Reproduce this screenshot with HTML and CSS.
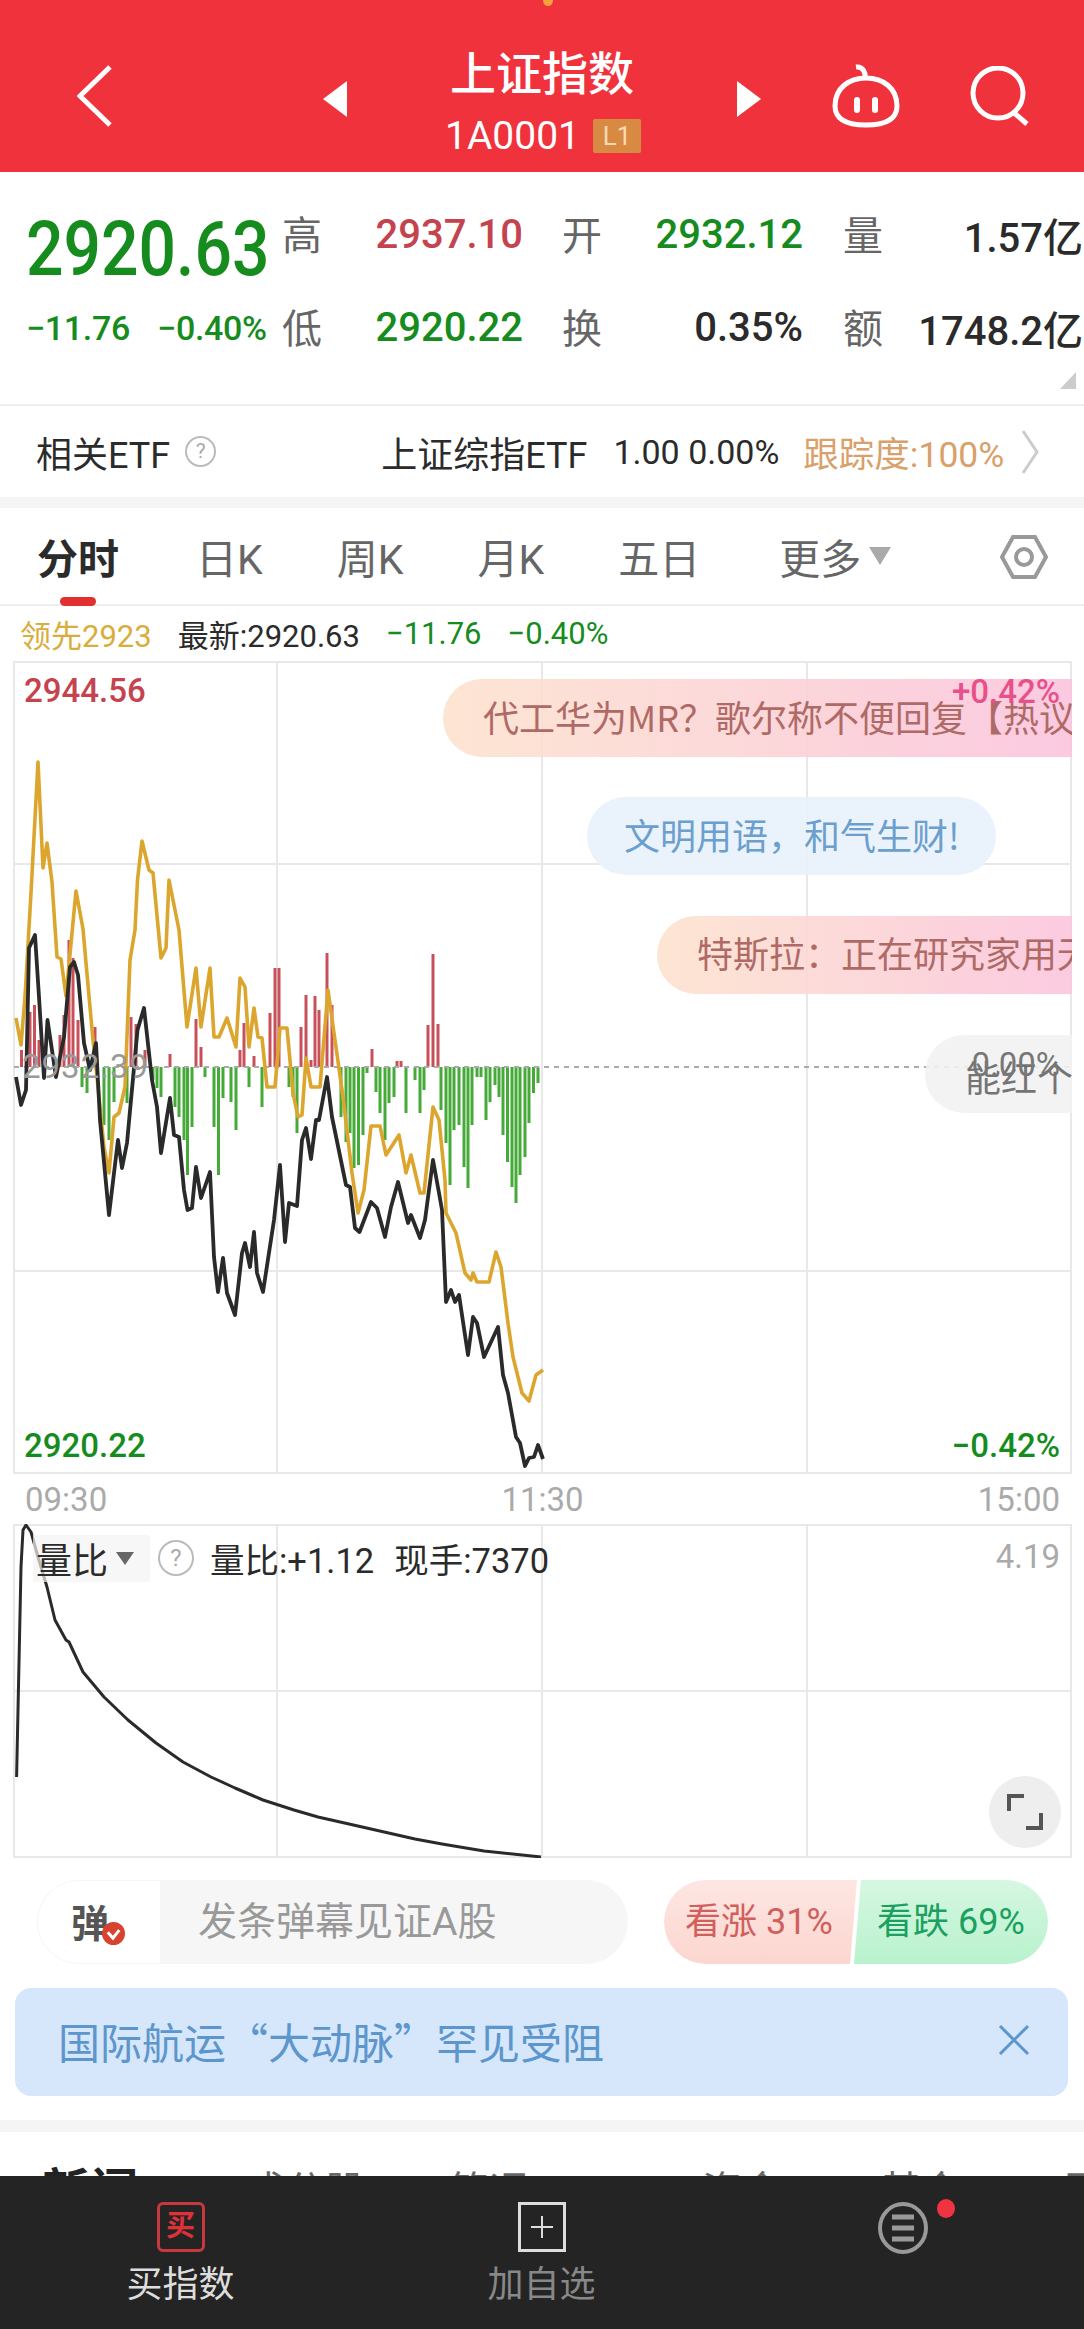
FILE: index.html
```html
<!DOCTYPE html>
<html lang="zh-CN">

<head>
    <title>上证指数</title>
    <meta name="viewport" content="width=device-width, initial-scale=1.0">
    <link rel="stylesheet" href="styles.css">
</head>

<body>
    <div id="header">
        <span class="status-dot"></span>
        <svg class="back" viewBox="0 0 35 62"><path d="M33 2 L3 31 L33 60" /></svg>
        <svg class="nav-arrow" viewBox="0 0 24 36"><path d="M24 0 V36 L0 18 Z" /></svg>
        <div class="title">
            <div class="title-name">上证指数</div>
            <div class="title-code">1A0001 <span class="badge">L1</span></div>
        </div>
        <svg class="nav-arrow" viewBox="0 0 24 36"><path d="M0 0 V36 L24 18 Z" /></svg>
        <svg class="pig" viewBox="0 0 70 64">
            <path d="M25 3 C32 2 35 9 34 15" />
            <path d="M4 42 C4 24 18 14 35 14 C52 14 66 24 66 42 C66 56 54 61 35 61 C16 61 4 56 4 42 Z" />
            <path class="eye" d="M26 36 V46 M44 36 V46" />
        </svg>
        <svg class="search" viewBox="0 0 60 60"><circle cx="29" cy="27" r="25" /><path d="M44 46 L58 58" /></svg>
    </div>

    <div id="quote">
        <div class="price">2920.63</div>
        <div class="label">高</div><div class="val red">2937.10</div>
        <div class="label right">开</div><div class="val green">2932.12</div>
        <div class="label right">量</div><div class="val">1.57亿</div>
        <div class="change"><span>−11.76</span><span>−0.40%</span></div>
        <div class="label">低</div><div class="val green">2920.22</div>
        <div class="label right">换</div><div class="val">0.35%</div>
        <div class="label right">额</div><div class="val">1748.2亿</div>
        <span class="corner"></span>
    </div>

    <div id="etf">
        <span>相关ETF</span>
        <span class="help">?</span>
        <span class="etf-name">上证综指ETF</span>
        <span class="etf-nums">1.00 0.00%</span>
        <span class="etf-track">跟踪度:100%</span>
        <svg class="chev" viewBox="0 0 18 44"><path d="M2 1 L16 22 L2 43" /></svg>
    </div>

    <div class="band"></div>

    <div id="tabs">
        <span class="tab active">分时</span>
        <span class="tab first">日K</span>
        <span class="tab">周K</span>
        <span class="tab">月K</span>
        <span class="tab">五日</span>
        <span class="tab more">更多<i class="more-arrow"></i></span>
        <svg class="hex" viewBox="0 0 48 44"><path d="M13 2 H35 L46 22 L35 42 H13 L2 22 Z" /><circle cx="24" cy="22" r="8" /></svg>
    </div>

    <div id="info">
        <span class="gold">领先2923</span>
        <span>最新:2920.63</span>
        <span class="green">−11.76</span>
        <span class="green">−0.40%</span>
    </div>

    <div id="chart">
        <svg class="plot" viewBox="0 661 1084 813">
            <path class="grid" d="M14 662 H1071 V1473 H14 Z M277 662 V1473 M542 662 V1473 M807 662 V1473 M14 864 H1071 M14 1271 H1071" />
            <path class="bar-red" d="M21.5 1050V1067M30 1012V1067M34.5 1005V1067M39 1040V1067M60 1035V1067M64 1015V1067M69 940V1067M73 958V1067M78 1020V1067M95 1027V1067M131 1017V1067M136 1024V1067M145 1050V1067M170 1054V1067M196 1019V1067M201 1047V1067M240 1050V1067M244 1023V1067M254 1056V1067M270 1013V1067M275 968V1067M279 968V1067M301 1027V1067M306 995V1067M311 1060V1067M315 996V1067M319 1010V1067M327 953V1067M332 1005V1067M372 1049V1067M397 1061V1067M401 1061V1067M428 1025V1067M433 954V1067M438 1024V1067" />
            <path class="bar-green" d="M82 1067V1087M87 1067V1093M104 1067V1125M109 1067V1140M114 1067V1102M127 1067V1103M153 1067V1080M157 1067V1088M161 1067V1097M175 1067V1107M179 1067V1117M184 1067V1140M187.5 1067V1175M192 1067V1127M205 1067V1077M214 1067V1127M218.5 1067V1175M223 1067V1098M231 1067V1102M236 1067V1130M249 1067V1087M262 1067V1107M289 1067V1087M293 1067V1097M297 1067V1133M341 1067V1117M346 1067V1142M350 1067V1133M354 1067V1168M358.5 1067V1165M363 1067V1135M367 1067V1073M376 1067V1092M380 1067V1113M385 1067V1140M389 1067V1103M394 1067V1097M406 1067V1113M415 1067V1080M420 1067V1113M424 1067V1090M441 1067V1110M446 1067V1143M450 1067V1185M454 1067V1130M459 1067V1125M464 1067V1167M468 1067V1188M472 1067V1125M477 1067V1077M481 1067V1077M486 1067V1120M490 1067V1102M495 1067V1085M499 1067V1097M503 1067V1135M507.5 1067V1162M512 1067V1187M516 1067V1203M520 1067V1175M525 1067V1157M529 1067V1123M533.5 1067V1093M538 1067V1083" />
            <path class="zero" d="M14 1067 H1071" />
            <polyline class="line-gold" points="16,1018 21,1045 25,997 31,893 38,762 43,868 47,843 52,882 57,957 61,959 66,996 76,891 83,929 86,963 93,1040 96,1067 104,1147 109,1173 114,1117 119,1113 125,1087 130,960 135,930 137.5,880 142,841 149,870 153,873 161,958 166,948 169,880 179,930 187,1027 196,968 201,1027 210,968 214,1037 219,1037 227,1018 236,1047 240,978 245,987 249,1047 254,1008 258,1037 262,1038 267,1087 275,1087 280,1028 287,1028 293,1093 298,1117 302,1115 306,1058 311,1087 320,1087 328,990 334,1033 343,1097 352,1173 358,1213 364,1190 371,1126 380,1126 386,1155 399,1135 406,1173 411,1155 420,1193 424,1193 433,1107 439,1120 445,1180 446,1213 456,1233 465,1273 471,1280 473,1273 477,1282 489,1282 496,1252 501,1267 508,1323 513,1357 522,1393 529,1401 536,1375 543,1370" />
            <polyline class="line-black" points="16,1077 21,1105 26,1090 29,948 35,935 39,997 44,1078 47.5,1020 56,1077 64,1037 70,967 74,962 78,975 84,1043 90,1070 96,1043 100,1120 109,1215 114,1173 118,1140 122,1168 127,1143 137.5,1030 144,1008 152,1080 157,1107 161,1153 170,1098 174,1135 179,1137 184,1190 187.5,1210 192,1208 196,1167 201,1198 210,1172 214,1257 218,1292 223,1258 227,1293 235,1315 242,1253 245,1243 250,1267 254,1232 257,1273 263,1292 274,1220 280,1165 285,1242 289,1203 297,1206 302,1140 306,1128 311,1159 316,1120 319,1120 327,1077 332,1117 346,1185 350,1187 355,1228 359.5,1232 371,1202 377,1208 385,1237 391,1207 398,1182 408,1223 411,1215 420,1238 425,1220 433,1160 439,1193 442,1210 446,1302 451,1290 455,1302 459,1295 468,1355 473,1317 477,1323 484,1357 498,1327 503,1375 508,1393 516,1437 520,1443 525,1466 529,1458 534,1457 538,1445 543,1459" />
        </svg>
        <div class="danmu-layer">
            <div class="bubble warm b1">代工华为MR？歌尔称不便回复【热议】</div>
            <div class="bubble cool b2">文明用语，和气生财!</div>
            <div class="bubble warm b3">特斯拉：正在研究家用无人机</div>
            <div class="bubble grey b4">能红个</div>
        </div>
        <span class="axis top-left red">2944.56</span>
        <span class="axis top-right pink">+0.42%</span>
        <span class="axis mid-left">2932.39</span>
        <span class="axis mid-right">0.00%</span>
        <span class="axis bottom-left green">2920.22</span>
        <span class="axis bottom-right green">−0.42%</span>
    </div>

    <div id="xaxis">
        <span>09:30</span>
        <span>11:30</span>
        <span>15:00</span>
    </div>

    <div id="subchart">
        <svg class="plot" viewBox="0 1524 1084 334">
            <path class="grid" d="M14 1525 H1071 V1857 H14 Z M277 1525 V1857 M542 1525 V1857 M807 1525 V1857 M14 1691 H1071" />
            <polyline class="line-thin" points="16.6,1777 21,1567 23,1530 26,1525 31,1532 38,1557 47,1587 55,1620 66,1640 69,1642 83,1672 104,1697 128,1720 156,1743 183,1762 211,1777 235,1788 263,1800 294,1810 318,1817 349,1824 415,1839 442,1844 484,1851 541,1857" />
        </svg>
        <div class="sub-info">
            <span class="chip">量比<i class="chip-arrow"></i></span>
            <span class="help big">?</span>
            <span>量比:+1.12</span>
            <span>现手:7370</span>
        </div>
        <span class="sub-max">4.19</span>
        <span class="expand">
            <svg viewBox="0 0 36 36"><path d="M2 17 V2 H17 M34 19 V34 H19" /></svg>
        </span>
    </div>

    <div id="danmu">
        <div class="danmu-input">
            <div class="danmu-mark">弹<span class="check"><svg viewBox="0 0 20 20"><path d="M5 9 L9.5 14 L15 7" /></svg></span></div>
            <div class="danmu-text">发条弹幕见证A股</div>
        </div>
        <div class="vote">
            <div class="vote-up">看涨 31%</div>
            <div class="vote-down">看跌 69%</div>
        </div>
    </div>

    <div id="banner">
        <span>国际航运“大动脉”罕见受阻</span>
        <svg class="close" viewBox="0 0 32 32"><path d="M2 2 L30 30 M30 2 L2 30" /></svg>
    </div>

    <div class="band news-band"></div>

    <div id="news">
        <span class="news-active">新闻</span>
        <span>成分股</span>
        <span>简况</span>
        <span>·</span>
        <span>资金</span>
        <span>基金</span>
        <span>更</span>
    </div>

    <div id="bottom">
        <div class="bottom-item light">
            <span class="buy-icon">买</span>
            <span>买指数</span>
        </div>
        <div class="bottom-item">
            <svg class="add-icon" viewBox="0 0 48 50"><rect x="1.5" y="1.5" width="45" height="47" /><path d="M24 14 V36 M13 25 H35" /></svg>
            <span>加自选</span>
        </div>
        <div class="bottom-item menu">
            <svg class="menu-icon" viewBox="0 0 50 52"><ellipse cx="25" cy="26" rx="23" ry="24" /><path d="M14 15 H36 M14 26 H36 M14 37 H36" /></svg>
            <i class="red-dot"></i>
        </div>
    </div>
</body>
</html>
```

FILE: styles.css
```css
* {
    box-sizing: border-box;
}
html, body {
    margin: 0;
    padding: 0;
}
body {
    width: 1084px;
    height: 2329px;
    overflow: hidden;
    background-color: #fff;
    color: #2b2b2b;
    font-family: Roboto, "Noto Sans CJK SC", sans-serif;
}
.red {
    color: #c4434e;
}
.green {
    color: #168c1e;
}
.gold {
    color: #d9ad3c;
}
.pink {
    color: #e8508a;
}
.band {
    height: 11px;
    background-color: #f5f5f5;
}

/* header */
#header {
    position: relative;
    height: 172px;
    padding-top: 18px;
    display: flex;
    align-items: center;
    background-color: #f0323c;
    color: #fff;
}
.status-dot {
    position: absolute;
    left: 543px;
    top: -5px;
    width: 10px;
    height: 11px;
    border-radius: 50%;
    background-color: #f9a03c;
}
#header svg path, #header svg circle {
    fill: none;
    stroke: #fff;
    stroke-width: 5;
}
.back {
    width: 35px;
    height: 62px;
    margin-left: 77px;
    margin-top: 2px;
}
#header .nav-arrow {
    width: 24px;
    height: 36px;
    margin-top: 8px;
}
#header .nav-arrow path {
    fill: #fff;
    stroke: none;
}
.back + .nav-arrow {
    margin-left: 211px;
}
.title {
    width: 390px;
    margin-top: 12px;
    text-align: center;
}
.title-name {
    font-size: 46px;
    line-height: 52px;
    font-weight: 500;
}
.title-code {
    display: flex;
    justify-content: center;
    align-items: center;
    gap: 13px;
    margin-top: 18px;
    padding-left: 2px;
    font-size: 39px;
    line-height: 36px;
}
.badge {
    width: 48px;
    height: 34px;
    line-height: 34px;
    background-color: #d98a42;
    color: #f6d9b4;
    font-size: 26px;
    border-radius: 2px;
}
.pig {
    width: 70px;
    height: 64px;
    margin-left: 70px;
    margin-top: 2px;
}
#header .pig .eye {
    stroke-width: 6;
    stroke-linecap: round;
}
.search {
    width: 60px;
    height: 60px;
    margin-left: 68px;
    margin-top: 2px;
}

/* quote */
#quote {
    position: relative;
    height: 234px;
    padding: 16px 0 0 25px;
    display: grid;
    grid-template-columns: 257px 40px 201px 79px 201px 80px 200px;
    grid-template-rows: 93px 93px;
    align-items: center;
    border-bottom: 2px solid #eee;
}
.price {
    margin-top: 30px;
    padding-left: 1px;
    color: #168c1e;
    font-size: 66px;
    font-weight: 500;
    line-height: 70px;
    transform: scaleY(1.14);
}
.change {
    display: flex;
    gap: 27px;
    padding-left: 1px;
    color: #168c1e;
    font-size: 34px;
    font-weight: 500;
    letter-spacing: -0.3px;
    white-space: nowrap;
}
.label {
    font-family: "Noto Sans CJK SC", sans-serif;
    font-size: 40px;
    color: #666;
    margin-top: -3px;
}
.label.right {
    text-align: right;
}
.val {
    text-align: right;
    font-size: 40px;
    font-weight: 500;
    padding-left: 2px;
}
.corner {
    position: absolute;
    right: 8px;
    bottom: 15px;
    width: 0;
    height: 0;
    border-left: 16px solid transparent;
    border-bottom: 17px solid #ccc;
}

/* etf row */
#etf {
    height: 91px;
    display: flex;
    align-items: center;
    padding-left: 36px;
    font-size: 36px;
}
.help {
    width: 31px;
    height: 31px;
    margin-left: 15px;
    border: 2px solid #bbb;
    border-radius: 50%;
    color: #aaa;
    font-size: 21px;
    line-height: 27px;
    text-align: center;
}
.etf-name {
    margin-left: 165px;
}
.etf-nums {
    margin-left: 26px;
    font-size: 34px;
}
.etf-track {
    margin-left: 24px;
    font-size: 35.5px;
    color: #d9a06a;
}
.chev {
    width: 18px;
    height: 44px;
    margin-left: 17px;
}
.chev path {
    fill: none;
    stroke: #ccc;
    stroke-width: 3;
}

/* period tabs */
#tabs {
    position: relative;
    height: 98px;
    display: flex;
    align-items: center;
    gap: 74px;
    padding: 0 0 0 37px;
    font-size: 41px;
    color: #666;
    border-bottom: 2px solid #eee;
}
.tab {
    display: flex;
    align-items: center;
}
.tab.first {
    margin-left: 3px;
}
.tab.more {
    margin-left: 5px;
}
.active {
    color: #2b2b2b;
    font-weight: 700;
}
.active::after {
    content: "";
    position: absolute;
    left: 60px;
    bottom: -2px;
    width: 36px;
    height: 9px;
    border-radius: 5px;
    background-color: #e03030;
}
.more-arrow {
    margin-left: 8px;
    border-left: 11px solid transparent;
    border-right: 11px solid transparent;
    border-top: 18px solid #aaa;
}
.hex {
    width: 48px;
    height: 44px;
    position: absolute;
    left: 1000px;
    top: 27px;
}
.hex path, .hex circle {
    fill: none;
    stroke: #999;
    stroke-width: 4;
}

/* info row */
#info {
    height: 55px;
    display: flex;
    align-items: center;
    gap: 26px;
    padding-left: 20px;
    font-size: 31px;
}

/* charts */
#chart {
    position: relative;
    height: 813px;
}
.plot {
    display: block;
    width: 1084px;
    height: 100%;
}
.grid {
    fill: none;
    stroke: #e8e8e8;
    stroke-width: 2;
}
.bar-red, .bar-green {
    fill: none;
    stroke-width: 3;
}
.bar-red {
    stroke: #c8505a;
}
.bar-green {
    stroke: #45aa38;
}
.zero {
    stroke: #aaa;
    stroke-width: 2;
    stroke-dasharray: 5 5;
}
.line-gold, .line-black, .line-thin {
    fill: none;
    stroke-linejoin: round;
}
.line-gold {
    stroke: #dca62e;
    stroke-width: 3.6;
}
.line-black {
    stroke: #2a2a2a;
    stroke-width: 3.8;
}
.line-thin {
    stroke: #2a2a2a;
    stroke-width: 3;
}
.axis {
    position: absolute;
    font-size: 33px;
    font-weight: 500;
    line-height: 36px;
}
.top-left {
    left: 24px;
    top: 12px;
}
.top-right {
    right: 24px;
    top: 13px;
}
.mid-left {
    left: 22px;
    top: 388px;
    color: #999;
    font-weight: 400;
    letter-spacing: 1px;
}
.mid-right {
    right: 24px;
    top: 386px;
    color: #777;
    font-weight: 400;
}
.bottom-left {
    left: 24px;
    top: 767px;
}
.bottom-right {
    right: 24px;
    top: 767px;
}
.danmu-layer {
    position: absolute;
    left: 0;
    top: 0;
    width: 1072px;
    height: 100%;
    overflow: hidden;
}
.bubble {
    position: absolute;
    height: 78px;
    line-height: 74px;
    padding: 0 36px 0 40px;
    border-radius: 39px;
    font-family: "Noto Sans CJK SC", sans-serif;
    font-size: 36px;
    white-space: nowrap;
    opacity: 0.9;
}
.warm {
    color: #a85a56;
    background-image: linear-gradient(90deg, #fde3cf, #fbc4de);
    border-radius: 39px 0 0 39px;
}
.cool {
    color: #5b95c9;
    background-color: #e8f2fc;
}
.grey {
    color: #777;
    background-color: #f2f2f2;
    border-radius: 39px 0 0 39px;
}
.b1 {
    left: 443px;
    top: 18px;
    width: 640px;
}
.b2 {
    left: 587px;
    top: 136px;
    padding-left: 37px;
}
.b3 {
    left: 657px;
    top: 255px;
    width: 440px;
    line-height: 72px;
}
.b4 {
    left: 925px;
    top: 374px;
    width: 160px;
    line-height: 82px;
    color: #666;
}
#xaxis {
    height: 50px;
    display: flex;
    justify-content: space-between;
    align-items: center;
    padding: 0 24px 0 25px;
    font-size: 33px;
    color: #aaa;
}
#subchart {
    position: relative;
    height: 334px;
}
.sub-info {
    position: absolute;
    left: 33px;
    top: 9px;
    display: flex;
    align-items: center;
    font-size: 34.5px;
    gap: 20px;
}
.chip {
    display: flex;
    align-items: center;
    width: 117px;
    height: 47px;
    padding-left: 3px;
    background-color: rgba(243, 243, 243, 0.7);
    font-size: 36px;
}
.chip-arrow {
    margin-left: 8px;
    border-left: 9px solid transparent;
    border-right: 9px solid transparent;
    border-top: 13px solid #666;
}
.help.big {
    width: 36px;
    height: 36px;
    margin: 0 -4px 0 -12px;
    font-size: 24px;
    line-height: 32px;
}
.sub-max {
    position: absolute;
    right: 24px;
    top: 13px;
    font-size: 33px;
    color: #aaa;
}
.expand {
    position: absolute;
    left: 989px;
    top: 252px;
    width: 72px;
    height: 72px;
    display: flex;
    align-items: center;
    justify-content: center;
    border-radius: 50%;
    background-color: #eee;
}
.expand svg {
    width: 36px;
    height: 36px;
}
.expand path {
    fill: none;
    stroke: #555;
    stroke-width: 4;
}

/* danmu input and vote */
#danmu {
    height: 130px;
    padding: 22px 36px 0 37px;
    display: flex;
    justify-content: space-between;
}
.danmu-input {
    width: 591px;
    height: 84px;
    display: flex;
    border-radius: 42px;
    overflow: hidden;
    background-color: #f6f6f6;
}
.danmu-mark {
    position: relative;
    width: 123px;
    padding: 12px 0 0 33px;
    background-color: #fff;
    border: 1px solid #f6f6f6;
    border-right: none;
    border-radius: 42px 0 0 42px;
    color: #555;
    font-size: 38px;
    font-weight: 700;
}
.check {
    position: absolute;
    left: 64px;
    top: 41px;
    width: 23px;
    height: 23px;
    border-radius: 50%;
    background-color: #d8422e;
    display: flex;
}
.check path {
    fill: none;
    stroke: #fff;
    stroke-width: 2.6;
}
.danmu-text {
    padding-left: 38px;
    font-size: 39px;
    line-height: 85px;
    color: #999;
}
.vote {
    width: 384px;
    height: 84px;
    display: flex;
    border-radius: 42px;
    overflow: hidden;
    font-size: 36px;
    line-height: 85px;
}
.vote-up {
    width: 193px;
    padding-left: 21px;
    color: #d0605c;
    white-space: nowrap;
    background-image: linear-gradient(#fde6e2, #fcd6d0);
    clip-path: polygon(0 0, 100% 0, calc(100% - 7px) 100%, 0 100%);
}
.vote-down {
    width: 194px;
    margin-left: -3px;
    padding-left: 23px;
    color: #1aa060;
    white-space: nowrap;
    background-image: linear-gradient(#d6f7e2, #b8f2cd);
    clip-path: polygon(7px 0, 100% 0, 100% 100%, 0 100%);
}
#banner {
    height: 108px;
    margin: 0 16px 0 15px;
    padding: 0 38px 4px 43px;
    display: flex;
    align-items: center;
    justify-content: space-between;
    border-radius: 16px;
    background-color: #d6e6fb;
    color: #5c96cc;
    font-family: "Noto Sans CJK SC", sans-serif;
    font-size: 42px;
}
.close {
    width: 32px;
    height: 32px;
}
.close path {
    fill: none;
    stroke: #5c96cc;
    stroke-width: 3;
}
.news-band {
    height: 12px;
    margin-top: 24px;
}
#news {
    height: 44px;
    overflow: hidden;
    display: grid;
    grid-template-columns: 203px 204px 146px 107px 179px 184px 1fr;
    padding: 32px 0 0 42px;
    font-size: 40px;
    line-height: 56px;
    color: #666;
}
.news-active {
    font-size: 48px;
    font-weight: 700;
    color: #222;
}

/* bottom bar */
#bottom {
    height: 153px;
    display: grid;
    grid-template-columns: 361px 361px 362px;
    background-color: #242424;
    color: #888;
    font-size: 36px;
}
.bottom-item {
    position: relative;
    padding-top: 26px;
    display: flex;
    flex-direction: column;
    align-items: center;
    gap: 3px;
}
.light {
    color: #ddd;
}
.buy-icon {
    width: 48px;
    height: 50px;
    border: 3px solid #c8383f;
    border-radius: 6px;
    color: #e0303a;
    font-size: 29px;
    font-weight: 700;
    line-height: 42px;
    text-align: center;
}
.add-icon {
    width: 48px;
    height: 50px;
}
.add-icon rect, .add-icon path {
    fill: none;
    stroke: #ddd;
    stroke-width: 3;
}
.add-icon path {
    stroke-width: 2;
}
.menu-icon {
    width: 50px;
    height: 52px;
}
.menu-icon ellipse {
    fill: none;
    stroke: #999;
    stroke-width: 4;
}
.menu-icon path {
    fill: none;
    stroke: #999;
    stroke-width: 5;
}
.red-dot {
    position: absolute;
    left: 215px;
    top: 23px;
    width: 18px;
    height: 19px;
    border-radius: 50%;
    background-color: #ef3340;
}
```
